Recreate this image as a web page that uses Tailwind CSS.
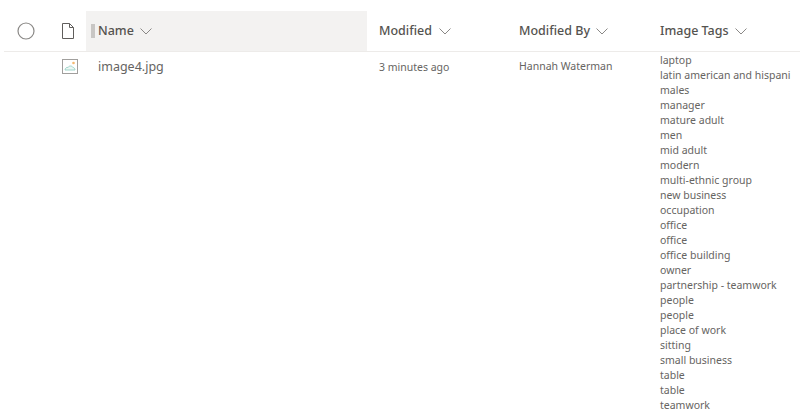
<!DOCTYPE html>
<html><head><meta charset="utf-8"><script src="https://cdn.jsdelivr.net/npm/@tailwindcss/browser@4"></script></head>
<body class="bg-white overflow-hidden">
<div class="w-[800px] h-[412px] overflow-hidden font-['Noto_Sans','Open_Sans',sans-serif] text-[#666462]">
  <div class="h-[41px] mt-[11px] ml-[4px] flex items-center border-b border-[#edebe9] text-[12.5px] font-medium text-[#55534f]">
    <div class="w-[44px] flex justify-center"><svg width="18" height="18" viewBox="0 0 18 18"><circle cx="9" cy="9" r="8" fill="none" stroke="#8a8886" stroke-width="1.2"/></svg></div>
    <div class="w-[38px] flex justify-center pl-[1px]"><svg width="14" height="17" viewBox="0 0 14 17" fill="none" stroke="#605e5c" stroke-width="1"><path d="M1.500 .5H8.500L12.500 4.500V15.500H1.500ZM8.500 .5V4.500H12.500"/></svg></div>
    <div class="w-[281px] h-[40px] bg-[#f3f2f1] flex items-center pl-[5px] gap-[3px]"><span class="w-[4px] h-[14px] bg-[#c8c6c4]"></span><span>Name</span><svg class="ml-[3px]" width="12" height="7" viewBox="0 0 12 7" fill="none" stroke="#8a8886"><path d="M.5 .5L6 6L11.500 .5"/></svg></div>
    <div class="w-[140px] pl-[12px] flex items-center gap-[7px]"><span>Modified</span><svg width="12" height="7" viewBox="0 0 12 7" fill="none" stroke="#8a8886"><path d="M.5 .5L6 6L11.500 .5"/></svg></div>
    <div class="w-[141px] pl-[12px] flex items-center gap-[6px]"><span>Modified By</span><svg width="12" height="7" viewBox="0 0 12 7" fill="none" stroke="#8a8886"><path d="M.5 .5L6 6L11.500 .5"/></svg></div>
    <div class="pl-[12px] flex items-center gap-[6px]"><span>Image Tags</span><svg width="12" height="7" viewBox="0 0 12 7" fill="none" stroke="#8a8886"><path d="M.5 .5L6 6L11.500 .5"/></svg></div>
  </div>
  <div class="ml-[4px] flex items-start">
    <div class="w-[44px]"></div>
    <div class="w-[38px] pt-[7px] pl-[14px]"><svg width="16" height="15" viewBox="0 0 16 15" fill="none"><rect x=".5" y=".5" width="15" height="14" fill="#fff" stroke="#a19f9d"/><path d="M3 11c0-2 2-3 3-2.500C7 6.500 10 6.500 11 8.500c1 0 2 1 2 2.500Z" stroke="#9fd5c9" fill="#eef7f5"/><circle cx="11.500" cy="4" r="1.300" fill="#f5b971"/></svg></div>
    <div class="w-[281px] pl-[12px] pt-[7px] text-[12.5px] leading-[16px]">image4.jpg</div>
    <div class="w-[140px] pl-[12px] pt-[8px] text-[10.5px] leading-[15px]">3 minutes ago</div>
    <div class="w-[141px] pl-[12px] pt-[7px] text-[10.5px] leading-[15px]">Hannah Waterman</div>
    <div class="pl-[12px] pt-[1px] text-[10.5px] leading-[15px] whitespace-nowrap">
      <div>laptop</div><div>latin american and hispani</div><div>males</div><div>manager</div><div>mature adult</div><div>men</div><div>mid adult</div><div>modern</div><div>multi-ethnic group</div><div>new business</div><div>occupation</div><div>office</div><div>office</div><div>office building</div><div>owner</div><div>partnership - teamwork</div><div>people</div><div>people</div><div>place of work</div><div>sitting</div><div>small business</div><div>table</div><div>table</div><div>teamwork</div>
    </div>
  </div>
</div>
</body></html>
